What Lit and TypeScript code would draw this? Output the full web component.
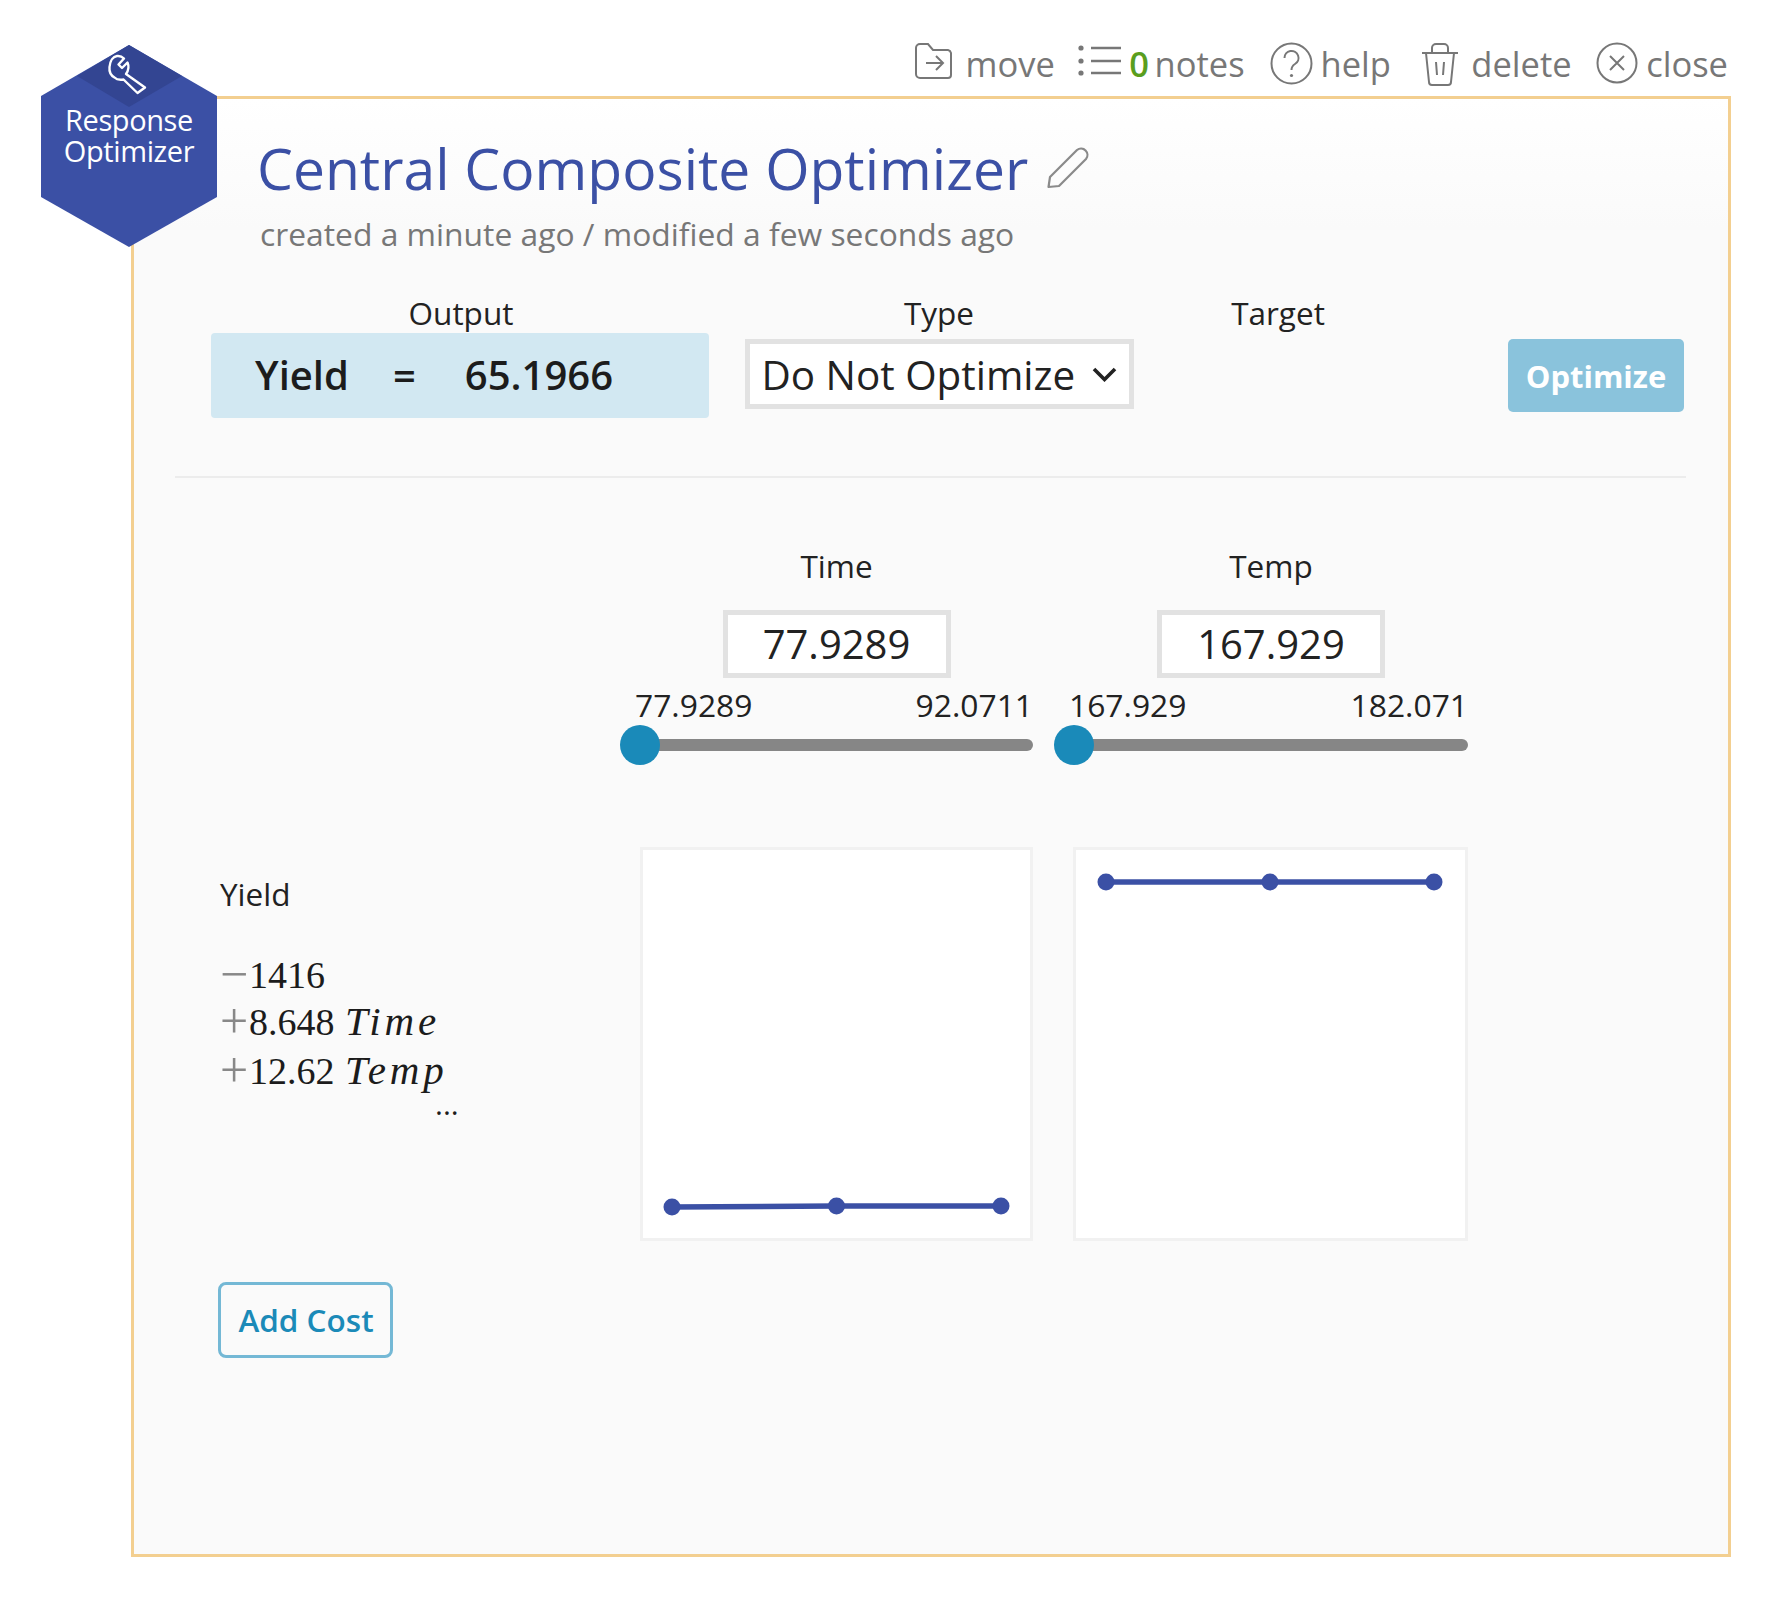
import { LitElement, html, css, svg } from "lit";
import { customElement } from "lit/decorators.js";

const icon = (w: number, h: number, body: unknown) =>
  html`<svg class="ico" width=${w} height=${h} viewBox="0 0 ${w} ${h}" fill="none" stroke="#777" stroke-width="2">${body}</svg>`;

@customElement("app-root")
export class AppRoot extends LitElement {
  static styles = css`
    :host { display: block; height: 1612px; box-sizing: border-box; padding-left: 131px; padding-right: 61px; position: relative; background: #fff; font-family: "Open Sans", sans-serif; color: #222; overflow: hidden; }
    .toolbar { height: 96px; box-sizing: border-box; display: flex; justify-content: flex-end; align-items: flex-start; padding-top: 42px; margin-right: 3px; color: #777; font-size: 34.5px; line-height: 44px; }
    .item { display: flex; align-items: flex-start; }
    .ico { display: block; flex: none; }
    .move { margin-right: 23.7px; }
    .move span { margin-left: 11px; }
    .notes { margin-right: 25px; }
    .help { margin-right: 29.8px; }
    .help span { margin-left: 7.9px; }
    .del { margin-right: 24.6px; }
    .del span { margin-left: 12.7px; }
    .close span { margin-left: 8px; }
    .zero { color: #5a9e1e; font-weight: 600; margin: 0 5.6px 0 6.8px; }
    .panel { box-sizing: border-box; height: 1461px; border: 3px solid #f3cf90; background: linear-gradient(#fff, #fafafa 130px); padding-left: 19px; }
    .head { padding-left: 104px; padding-top: 31px; height: 150px; box-sizing: border-box; }
    .title { display: flex; align-items: center; gap: 19px; font-size: 57px; line-height: 76px; color: #3b50a5; }
    .sub { font-size: 31.8px; line-height: 44px; color: #777; margin-top: 6px; margin-left: 3px; }
    .outrow { margin-top: 44px; height: 183px; display: grid; grid-template-columns: 498px 390px 1fr 176px; column-gap: 34px; margin-left: 58px; margin-right: 44px; box-sizing: border-box; }
    .outcol { display: flex; flex-direction: column; align-items: center; }
    .lab { font-size: 31.5px; line-height: 40px; text-align: center; }
    .shift { padding-left: 2px; }
    .outbox { width: 498px; height: 85px; box-sizing: border-box; background: #d2e8f2; border-radius: 4px; display: flex; align-items: center; padding: 0 0 2px 44px; font-size: 40px; font-weight: 600; color: #1c1c1c; }
    .outbox .eq { margin-left: 44px; }
    .outbox .val { margin-left: 49px; }
    .select { margin: 6px 0 0 2px; width: 389px; height: 70px; box-sizing: border-box; border: 5px solid #e2e2e2; background: #fff; display: flex; align-items: center; justify-content: space-between; padding: 0 12px; font-size: 40.4px; color: #222; }
    .tgtlab { text-align: center; width: 222px; }
    .opt { align-self: start; margin-top: 46px; width: 176px; height: 73px; box-sizing: border-box; background: #8ac3dc; color: #fff; border-radius: 5px; display: flex; align-items: center; justify-content: center; font-size: 31px; font-weight: 700; }
    .rule { height: 2px; background: #ececec; margin: 0 42px 0 22px; }
    .vars { margin-top: 68px; margin-left: 487px; display: grid; grid-template-columns: 393px 394px; column-gap: 41px; width: 828px; }
    .var { display: flex; flex-direction: column; align-items: center; }
    .input { margin-top: 24px; width: 228px; height: 68px; box-sizing: border-box; border: 5px solid #e2e2e2; background: #fff; display: flex; align-items: center; justify-content: center; font-size: 40px; color: #222; padding-bottom: 2px; }
    .range { align-self: stretch; display: flex; justify-content: space-between; font-size: 31.8px; line-height: 40px; margin: 7px 0 0 -5px; }
    .slider { width: 100%; height: 12px; margin-top: 14px; background: #868686; border-radius: 6px; position: relative; }
    .thumb { position: absolute; left: -20px; top: -14px; width: 40px; height: 40px; border-radius: 50%; background: #1a8ab9; }
    .plots { margin-top: 96px; display: flex; margin-left: 67px; }
    .eqn { width: 420px; flex: none; padding-top: 27px; }
    .eqn-t { font-size: 31.5px; line-height: 40px; }
    .math { margin-top: 37px; font-family: "Liberation Serif", serif; font-size: 38px; line-height: 49px; color: #1c1c1c; }
    .math i { font-size: 41px; letter-spacing: 3.8px; margin-left: 1px; }
    .r1 { height: 46px; }
    .r2 { height: 49px; }
    .r3 { height: 52px; }
    .math .sign { color: #888; display: inline-block; width: 29px; font-size: 50px; line-height: 0; vertical-align: -3px; }
    .dots { font-size: 30px; line-height: 12px; padding-left: 215px; font-family: "Open Sans", sans-serif; }
    .chart { display: block; flex: none; background: #fff; border: 3px solid #f1f1f1; box-sizing: border-box; }
    .c1 { width: 393px; height: 394px; margin-right: 40px; }
    .c2 { width: 395px; height: 394px; }
    .add { margin-left: 65px; margin-top: 41px; width: 175px; height: 76px; box-sizing: border-box; border: 3px solid #74b8d5; border-radius: 8px; color: #1b8ab8; font-size: 31.5px; font-weight: 600; display: flex; align-items: center; justify-content: center; padding: 0 0 2px 1px; }
    .hex { position: absolute; left: 41px; top: 45px; width: 176px; height: 202px; }
    .hex-t { position: absolute; left: 41px; top: 104px; width: 176px; text-align: center; color: #fff; font-size: 29px; line-height: 31px; letter-spacing: -0.4px; }
  `;

  chart(x1: number, y: number, y2: number, x3: number) {
    const x2 = (x1 + x3) / 2;
    return svg`<line x1=${x1} y1=${y} x2=${x2} y2=${y2} stroke="#3b50a5" stroke-width="5.5"/>
      <line x1=${x2} y1=${y2} x2=${x3} y2=${y2} stroke="#3b50a5" stroke-width="5.5"/>
      <circle cx=${x1} cy=${y} r="8.5" fill="#3b50a5"/><circle cx=${x2} cy=${y2} r="8.5" fill="#3b50a5"/><circle cx=${x3} cy=${y2} r="8.5" fill="#3b50a5"/>`;
  }

  variable(name: string, val: string, lo: string, hi: string) {
    return html`<div class="var">
      <div class="lab">${name}</div>
      <div class="input">${val}</div>
      <div class="range"><span>${lo}</span><span>${hi}</span></div>
      <div class="slider"><div class="thumb"></div></div>
    </div>`;
  }

  render() {
    return html`
      <div class="toolbar">
        <div class="item move">
          ${icon(40, 38, svg`<path d="M2 6a4 4 0 0 1 4-4h8l5 6h15a4 4 0 0 1 3 3v22a3 3 0 0 1-3 3H6a4 4 0 0 1-4-4z"/><path d="M12 21h17M22 14l7 7-7 7"/>`)}
          <span>move</span>
        </div>
        <div class="item notes">
          ${icon(44, 36, svg`<g stroke-width="2.6"><path d="M13 6h30M13 19h30M13 31h30"/></g><g fill="#777" stroke="none"><circle cx="3" cy="6" r="2.6"/><circle cx="3" cy="19" r="2.6"/><circle cx="3" cy="31" r="2.6"/></g>`)}
          <span class="zero">0</span><span>notes</span>
        </div>
        <div class="item help">
          ${icon(43, 43, svg`<circle cx="21.5" cy="21.5" r="20"/><path d="M14.5 16a7 7 0 1 1 10.5 6c-2.5 1.5-3.5 3-3.5 6"/><circle cx="21.5" cy="33.5" r="1.6" fill="#777" stroke="none"/>`)}
          <span>help</span>
        </div>
        <div class="item del">
          ${icon(38, 45, svg`<path d="M1 11h36M11 10V6a4 4 0 0 1 4-4h8a4 4 0 0 1 4 4v4M5 11l3 29a3 3 0 0 0 3 3h16a3 3 0 0 0 3-3l3-29M15 20l1 13M23 20l-1 13"/>`)}
          <span>delete</span>
        </div>
        <div class="item close">
          ${icon(42, 42, svg`<circle cx="21" cy="21" r="19.5"/><path d="M14 14l14 14M28 14L14 28"/>`)}
          <span>close</span>
        </div>
      </div>
      <div class="panel">
        <div class="head">
          <div class="title"><span>Central Composite Optimizer</span>
            ${html`<svg class="ico" width="42" height="42" viewBox="0 0 42 42" fill="none" stroke="#8a8a8a" stroke-width="2.2" stroke-linejoin="round"><path d="M1.5 40L3 30L30 3A6.4 6.4 0 0 1 39 12L12 39Z"/></svg>`}
          </div>
          <div class="sub">created a minute ago / modified a few seconds ago</div>
        </div>
        <div class="outrow">
          <div class="outcol"><div class="lab shift">Output</div>
            <div class="outbox"><span>Yield</span><span class="eq">=</span><span class="val">65.1966</span></div></div>
          <div class="outcol"><div class="lab shift">Type</div>
            <div class="select"><span>Do Not Optimize</span>
              <svg width="25" height="15" viewBox="0 0 25 15" fill="none" stroke="#222" stroke-width="3.6"><path d="M2 2l10.5 10.5L23 2"/></svg></div></div>
          <div><div class="lab tgtlab">Target</div></div>
          <div class="opt">Optimize</div>
        </div>
        <div class="rule"></div>
        <div class="vars">
          ${this.variable("Time", "77.9289", "77.9289", "92.0711")}
          ${this.variable("Temp", "167.929", "167.929", "182.071")}
        </div>
        <div class="plots">
          <div class="eqn">
            <div class="eqn-t">Yield</div>
            <div class="math">
              <div class="r1"><span class="sign">−</span>1416</div>
              <div class="r2"><span class="sign">+</span>8.648 <i>Time</i></div>
              <div class="r3"><span class="sign">+</span>12.62 <i>Temp</i></div>
              <div class="dots">...</div>
            </div>
          </div>
          <svg class="chart c1" viewBox="0 0 387 388">${this.chart(29, 357, 356, 358)}</svg>
          <svg class="chart c2" viewBox="0 0 389 388">${this.chart(30, 32, 32, 358)}</svg>
        </div>
        <div class="add">Add Cost</div>
      </div>
      <svg class="hex" viewBox="0 0 176 202">
        <path d="M88 0L176 51V152L88 202L0 152V51z" fill="#3b50a5"/>
        <path d="M88 0L141 31L88 62L36 31z" fill="#334592"/>
        <path d="M83 13.5L77.5 19.5L81 23L86.5 17.5C88 21 87.5 25.5 85 29L104 42.5L96.5 48L82.5 34.5C79 35 76 35 73.5 32.5C70 30.5 68 27 68.5 22C69 16 72 11.5 76 11C78.5 10.7 81 11.5 83 13.5Z" fill="none" stroke="#fff" stroke-width="2.4" stroke-linejoin="round"/>
      </svg>
      <div class="hex-t">Response<br />Optimizer</div>
    `;
  }
}
